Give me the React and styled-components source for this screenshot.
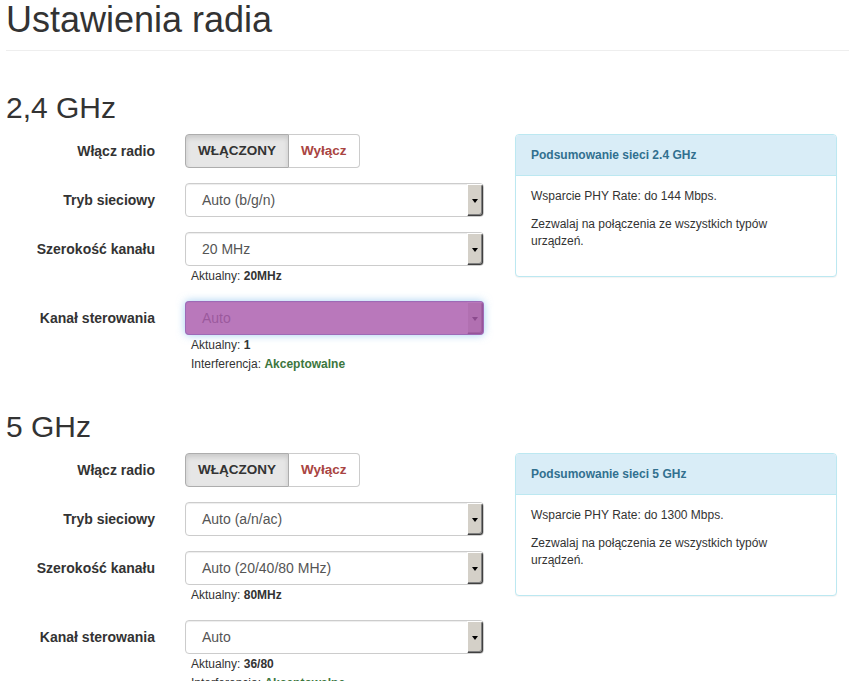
import React from 'react';
import styled, { createGlobalStyle } from 'styled-components';

const GlobalStyle = createGlobalStyle`
  html, body {
    margin: 0;
    padding: 0;
    overflow: hidden;
    background: #fff;
  }
  body {
    font-family: "Liberation Sans", Arial, Helvetica, sans-serif;
    color: #333;
  }
`;

const sections = [
  {
    title: '2,4 GHz',
    mode: 'Auto (b/g/n)',
    width: '20 MHz',
    widthNow: '20MHz',
    channelNow: '1',
    focused: true,
    summary: 'Podsumowanie sieci 2.4 GHz',
    rate: 'Wsparcie PHY Rate: do 144 Mbps.',
  },
  {
    title: '5 GHz',
    mode: 'Auto (a/n/ac)',
    width: 'Auto (20/40/80 MHz)',
    widthNow: '80MHz',
    channelNow: '36/80',
    focused: false,
    summary: 'Podsumowanie sieci 5 GHz',
    rate: 'Wsparcie PHY Rate: do 1300 Mbps.',
  },
];

const Select = ({ value, focused }) => (
  <SelectBox focused={focused}>
    <SelectValue>{value}</SelectValue>
    <ArrowBox>
      <Triangle />
    </ArrowBox>
    {focused && <Highlight />}
  </SelectBox>
);

const Section = ({ s }) => (
  <>
    <SectionTitle>{s.title}</SectionTitle>
    <SectionBody>
      <Form>
        <Row>
          <Label>Włącz radio</Label>
          <BtnGroup>
            <Btn active>WŁĄCZONY</Btn>
            <Btn danger>Wyłącz</Btn>
          </BtnGroup>
        </Row>
        <Row>
          <Label>Tryb sieciowy</Label>
          <Select value={s.mode} />
        </Row>
        <Row>
          <Label>Szerokość kanału</Label>
          <div>
            <Select value={s.width} />
            <Help>
              Aktualny: <b>{s.widthNow}</b>
            </Help>
          </div>
        </Row>
        <Row>
          <Label>Kanał sterowania</Label>
          <div>
            <Select value="Auto" focused={s.focused} />
            <Help>
              Aktualny: <b>{s.channelNow}</b>
            </Help>
            <Help>
              Interferencja: <Good>Akceptowalne</Good>
            </Help>
          </div>
        </Row>
      </Form>
      <Panel>
        <PanelHeading>{s.summary}</PanelHeading>
        <PanelBody>
          <p>{s.rate}</p>
          <p>Zezwalaj na połączenia ze wszystkich typów urządzeń.</p>
        </PanelBody>
      </Panel>
    </SectionBody>
  </>
);

export default function App() {
  return (
    <Page>
      <GlobalStyle />
      <PageTitle>Ustawienia radia</PageTitle>
      <Divider />
      {sections.map((s) => (
        <Section key={s.title} s={s} />
      ))}
    </Page>
  );
}

const Page = styled.div`
  padding-left: 6px;
`;

const PageTitle = styled.h1`
  margin: 0;
  font-size: 36px;
  line-height: 40px;
  font-weight: 400;
  color: #333;
`;

const Divider = styled.hr`
  margin: 10px 0 40px;
  border: 0;
  border-top: 1px solid #eee;
`;

const SectionTitle = styled.h2`
  margin: 21px 0 10px;
  font-size: 30px;
  line-height: 33px;
  font-weight: 400;
  color: #333;
`;

const SectionBody = styled.div`
  display: flex;
  align-items: flex-start;
  gap: 31px;
`;

const Form = styled.div`
  width: 478px;
`;

const Row = styled.div`
  display: grid;
  grid-template-columns: 149px 299px;
  column-gap: 30px;
  margin-bottom: 15px;
`;

const Label = styled.div`
  text-align: right;
  font-size: 14px;
  font-weight: 700;
  line-height: 20px;
  padding-top: 7px;
  color: #333;
`;

const BtnGroup = styled.div`
  display: flex;
`;

const Btn = styled.div`
  padding: 6px 12px;
  font-size: 13.5px;
  font-weight: 700;
  line-height: 20px;
  border: 1px solid ${({ active }) => (active ? '#adadad' : '#ccc')};
  background: ${({ active }) => (active ? '#e6e6e6' : '#fff')};
  box-shadow: ${({ active }) => (active ? 'inset 0 3px 5px rgba(0,0,0,.125)' : 'none')};
  color: ${({ danger }) => (danger ? '#a94442' : '#333')};
  &:first-child {
    border-radius: 4px 0 0 4px;
  }
  &:last-child {
    border-radius: 0 4px 4px 0;
    border-left: 0;
  }
`;

const SelectBox = styled.div`
  position: relative;
  display: flex;
  height: 34px;
  box-sizing: border-box;
  border: 1px solid ${({ focused }) => (focused ? '#66afe9' : '#ccc')};
  border-radius: 4px;
  background: #fff;
  box-shadow: ${({ focused }) =>
    focused
      ? 'inset 0 1px 1px rgba(0,0,0,.075), 0 0 8px rgba(102,175,233,.6)'
      : 'inset 0 1px 1px rgba(0,0,0,.075)'};
`;

const SelectValue = styled.div`
  flex: 1;
  padding-left: 16px;
  font-size: 14px;
  line-height: 32px;
  color: #555;
`;

const ArrowBox = styled.div`
  width: 16px;
  box-sizing: border-box;
  display: flex;
  align-items: center;
  justify-content: center;
  background: #d4d0c8;
  border-top: 1px solid #fff;
  border-left: 1px solid #fff;
  border-right: 1px solid #404040;
  border-bottom: 1px solid #404040;
  box-shadow: inset -1px -1px 0 #808080;
  border-radius: 0 3px 3px 0;
`;

const Triangle = styled.div`
  width: 0;
  height: 0;
  border-left: 3.5px solid transparent;
  border-right: 3.5px solid transparent;
  border-top: 4px solid #000;
  margin-top: 1px;
`;

const Highlight = styled.div`
  position: absolute;
  inset: -1px;
  border-radius: 4px;
  background: rgba(170, 90, 172, 0.82);
`;

const Help = styled.div`
  padding-left: 6px;
  margin-top: 1px;
  font-size: 12px;
  line-height: 19px;
  color: #333;
  & + & {
    margin-top: 0;
  }
`;

const Good = styled.b`
  color: #3c763d;
`;

const Panel = styled.div`
  width: 322px;
  box-sizing: border-box;
  border: 1px solid #bce8f1;
  border-radius: 4px;
  background: #fff;
  box-shadow: 0 1px 1px rgba(0,0,0,.05);
`;

const PanelHeading = styled.div`
  padding: 13px 15px;
  background: #d9edf7;
  border-bottom: 1px solid #bce8f1;
  border-radius: 3px 3px 0 0;
  color: #31708f;
  font-size: 12px;
  font-weight: 700;
  line-height: 14px;
`;

const PanelBody = styled.div`
  padding: 12px 15px 15px;
  font-size: 12px;
  line-height: 17px;
  color: #333;
  p {
    margin: 0 0 11px;
    max-width: 250px;
  }
`;
